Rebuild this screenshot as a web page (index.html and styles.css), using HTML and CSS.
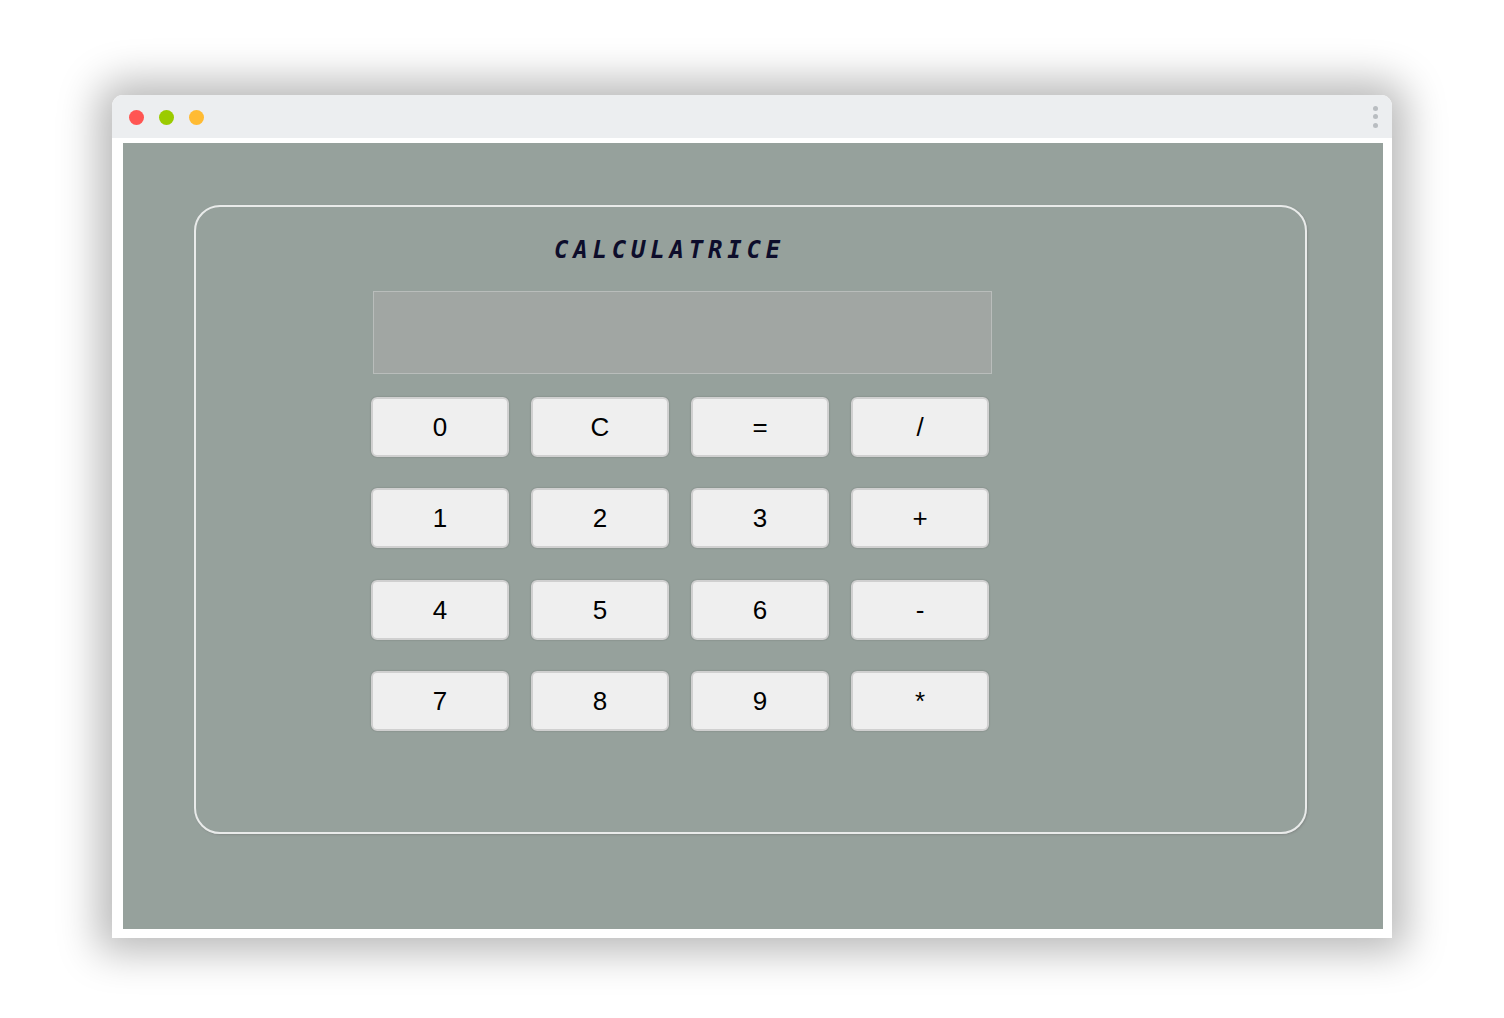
FILE: index.html
```html
<!DOCTYPE html>
<html lang="fr">
<head>
<meta charset="utf-8">
<title>Calculatrice</title>
<link rel="stylesheet" href="styles.css">
</head>
<body>
<div class="stage">
  <div class="window">
    <div class="titlebar">
      <div class="lights">
        <span class="light red"></span>
        <span class="light green"></span>
        <span class="light orange"></span>
      </div>
      <div class="menu"><span></span><span></span><span></span></div>
    </div>
    <div class="frame">
      <div class="viewport">
        <div class="card">
          <h1 class="title">CALCULATRICE</h1>
          <div class="display"></div>
          <div class="keys">
            <button class="key">0</button>
            <button class="key">C</button>
            <button class="key">=</button>
            <button class="key">/</button>
            <button class="key">1</button>
            <button class="key">2</button>
            <button class="key">3</button>
            <button class="key">+</button>
            <button class="key">4</button>
            <button class="key">5</button>
            <button class="key">6</button>
            <button class="key">-</button>
            <button class="key">7</button>
            <button class="key">8</button>
            <button class="key">9</button>
            <button class="key">*</button>
          </div>
        </div>
      </div>
    </div>
  </div>
</div>
</body>
</html>
```

FILE: styles.css
```css
html, body {
  margin: 0;
  padding: 0;
  background: #ffffff;
}

.stage {
  width: 1504px;
  height: 1018px;
  padding: 95px 0 0 112px;
  box-sizing: border-box;
}

.window {
  width: 1280px;
  height: 843px;
  background: #ffffff;
  border-radius: 11px 11px 0 0;
  box-shadow: 0 0 40px 14px rgba(0, 0, 0, 0.28);
  display: flex;
  flex-direction: column;
}

.titlebar {
  height: 43px;
  background: #eceef0;
  border-radius: 11px 11px 0 0;
  display: flex;
  align-items: center;
  justify-content: space-between;
  padding: 0 14px 0 17px;
}

.lights {
  display: flex;
  gap: 15px;
  margin-top: 1px;
}

.light {
  width: 15px;
  height: 15px;
  border-radius: 50%;
  display: block;
}

.red { background: #ff5552; }
.green { background: #9bcb00; }
.orange { background: #ffbb33; }

.menu {
  display: flex;
  flex-direction: column;
  gap: 3.5px;
}

.menu span {
  width: 5px;
  height: 5px;
  border-radius: 50%;
  background: #b9bdc1;
  display: block;
}

.frame {
  flex: 1;
  padding: 5px 9px 9px 11px;
  display: flex;
}

.viewport {
  flex: 1;
  background: #96a19c;
  padding: 62px 0 0 71px;
}

.card {
  width: 1113px;
  height: 629px;
  box-sizing: border-box;
  border: 2px solid #e9ebea;
  border-radius: 26px;
  box-shadow: 1px 1px 2px rgba(110, 110, 110, 0.45);
  padding: 30px 0 0 175px;
}

.title {
  margin: 0 0 28px 183px;
  font-family: "DejaVu Sans Mono", monospace;
  font-weight: bold;
  font-style: italic;
  font-size: 24px;
  line-height: 26px;
  letter-spacing: 4.8px;
  color: #0d0d2b;
}

.display {
  width: 619px;
  height: 83px;
  box-sizing: border-box;
  margin-left: 2px;
  background: #a1a6a3;
  border: 1px solid #b9bdbb;
  margin-bottom: 23px;
}

.keys {
  display: grid;
  grid-template-columns: repeat(4, 138px);
  grid-auto-rows: 60px;
  column-gap: 22px;
  row-gap: 31.3px;
}

.key {
  margin: 0;
  padding: 0;
  background: #efefef;
  border: 2px solid #d0d0d0;
  border-radius: 6px;
  box-shadow: 0 0 1.5px rgba(0, 0, 0, 0.3);
  font-family: "Liberation Sans", Arial, sans-serif;
  font-size: 26px;
  color: #000000;
  line-height: 1;
}
```
